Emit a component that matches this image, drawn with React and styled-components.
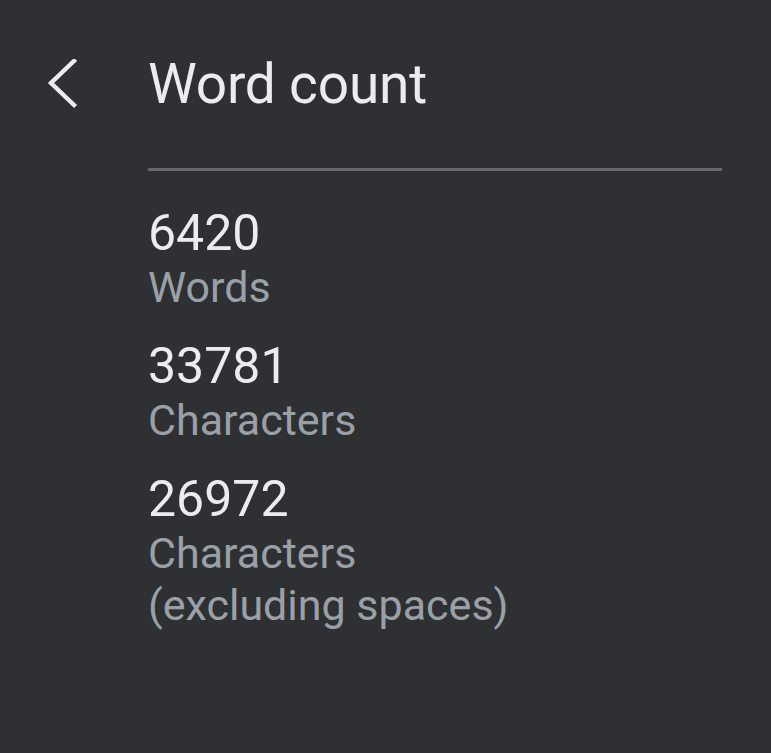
import React from "react";
import styled, { createGlobalStyle } from "styled-components";

const GlobalStyle = createGlobalStyle`
  html, body {
    margin: 0;
    padding: 0;
    background: #2f3034;
  }
  body {
    font-family: Roboto, "Liberation Sans", sans-serif;
  }
`;

const stats = [
  { value: "6420", label: ["Words"] },
  { value: "33781", label: ["Characters"] },
  { value: "26972", label: ["Characters", "(excluding spaces)"] },
];

function App() {
  return (
    <Page>
      <GlobalStyle />
      <Header>
        <BackButton aria-label="Back">
          <svg width="34" height="50" viewBox="0 0 34 50">
            <polyline
              points="30,2 7,24 30,46"
              fill="none"
              stroke="#ececef"
              strokeWidth="4.4"
              strokeLinecap="square"
            />
          </svg>
        </BackButton>
        <Title>Word count</Title>
      </Header>
      <Content>
        <Divider />
        <StatList>
          {stats.map((s) => (
            <Stat key={s.value}>
              <Value>{s.value}</Value>
              {s.label.map((l) => (
                <Label key={l}>{l}</Label>
              ))}
            </Stat>
          ))}
        </StatList>
      </Content>
    </Page>
  );
}

export default App;

const Page = styled.div`
  width: 771px;
  height: 753px;
  background: #2f3034;
  color: #ececef;
  overflow: hidden;
`;

const Header = styled.div`
  display: flex;
  align-items: center;
  padding: 53px 0 0 44px;
  height: 62px;
`;

const BackButton = styled.div`
  width: 104px;
  display: flex;
  align-items: center;
  svg {
    display: block;
  }
`;

const Title = styled.h1`
  margin: 0;
  font-size: 55px;
  font-weight: 400;
  line-height: 62px;
  color: #ececef;
  letter-spacing: -0.2px;
`;

const Content = styled.div`
  padding: 0 49px 0 148px;
`;

const Divider = styled.div`
  margin-top: 53px;
  height: 3px;
  background: #67686c;
`;

const StatList = styled.div`
  display: flex;
  flex-direction: column;
  gap: 25px;
  padding-top: 34px;
`;

const Stat = styled.div`
  display: flex;
  flex-direction: column;
`;

const Value = styled.div`
  font-size: 50px;
  line-height: 56px;
  color: #ececef;
`;

const Label = styled.div`
  font-size: 43px;
  line-height: 52px;
  color: #9aa0a6;
`;
